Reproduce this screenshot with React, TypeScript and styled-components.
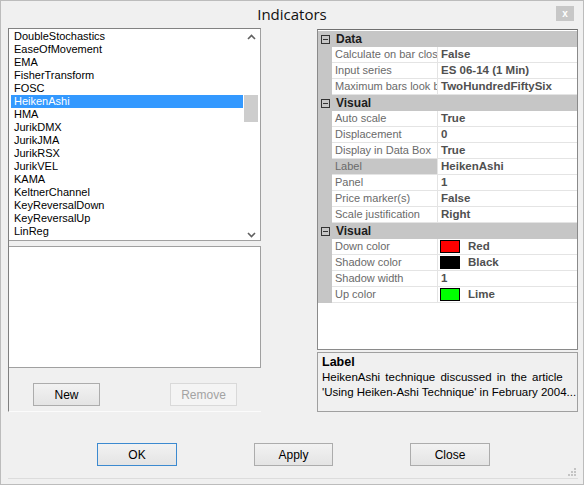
import React from "react"
import styled, { createGlobalStyle } from "styled-components"

const GlobalStyle = createGlobalStyle`
  * { box-sizing: border-box; }
  body {
    margin: 0;
    background: #f0f0f0;
    font-family: "Liberation Sans", Arial, sans-serif;
  }
`

const Window = styled.div`
  width: 584px;
  height: 485px;
  border: 1px solid #bcbcbc;
  background: #f0f0f0;
  display: flex;
  flex-direction: column;
  position: relative;
`

const TitleBar = styled.div`
  height: 25px;
  display: flex;
  align-items: center;
  justify-content: center;
  font-family: "Open Sans", "Noto Sans", sans-serif;
  font-size: 15px;
  color: #111;
  position: relative;
`

const CloseBox = styled.div`
  position: absolute;
  right: 9px;
  top: 5px;
  width: 18px;
  height: 15px;
  background: #c7c7c7;
  color: #fff;
  font-size: 10px;
  font-weight: bold;
  display: flex;
  align-items: center;
  justify-content: center;
  font-family: "Liberation Sans", sans-serif;
`

const Client = styled.div`
  flex: 1;
  margin: 0 5px 5px 7px;
  display: flex;
  flex-direction: column;
  border-bottom: 1px solid #dcdcdc;
  position: relative;
`

const Split = styled.div`
  display: flex;
  padding-top: 2px;
  gap: 56px;
`

const LeftPanel = styled.div`
  width: 253px;
  height: 384px;
  border-left: 1px solid #7f7f7f;
  border-bottom: 1px solid #fbfbfb;
  display: flex;
  flex-direction: column;
`

const ListBox = styled.div`
  width: 252px;
  height: 213px;
  border: 1px solid #a0a0a0;
  border-top-color: #828282;
  border-left: none;
  background: #fff;
  display: flex;
  padding-top: 1px;
`

const Items = styled.div`
  flex: 1;
  padding-left: 2px;
`

const Item = styled.div<{ $selected?: boolean }>`
  height: 13px;
  line-height: 13px;
  font-size: 11px;
  padding-left: 3px;
  color: ${(p) => (p.$selected ? "#fff" : "#000")};
  background: ${(p) => (p.$selected ? "#3399ff" : "transparent")};
  white-space: nowrap;
`

const ScrollBar = styled.div`
  width: 17px;
  position: relative;
  display: flex;
  flex-direction: column;
  justify-content: space-between;
  align-items: center;
  padding: 4px 0 2px;
`

const Thumb = styled.div`
  position: absolute;
  left: 1px;
  top: 65px;
  width: 14px;
  height: 27px;
  background: #cdcdcd;
`

const DetailBox = styled.div`
  margin-top: 5px;
  width: 252px;
  height: 122px;
  border: 1px solid #a0a0a0;
  border-left: none;
  background: #fff;
`

const PanelButtons = styled.div`
  display: flex;
  gap: 70px;
  padding: 15px 0 0 24px;
`

const Button = styled.button<{ $width?: number; $default?: boolean }>`
  width: ${(p) => p.$width ?? 67}px;
  height: 23px;
  padding: 0;
  font-family: "Liberation Sans", Arial, sans-serif;
  font-size: 12px;
  color: #000;
  border: 1px solid ${(p) => (p.$default ? "#3c8ad0" : "#acacac")};
  background: linear-gradient(#f2f2f2, #e4e4e4);
  &:disabled {
    color: #a3a3a3;
    border-color: #d9d9d9;
    background: #f4f4f4;
  }
`

const RightPanel = styled.div`
  width: 261px;
  display: flex;
  flex-direction: column;
`

const Grid = styled.div`
  margin-top: 1px;
  height: 321px;
  border: 1px solid #8a8a8a;
  border-top-color: #6f6f6f;
  padding-top: 1px;
  background: #fff;
`

const Row = styled.div`
  display: grid;
  grid-template-columns: 14px 106px 1fr;
  height: 16px;
`

const Margin = styled.div`
  background: #c6c6c6;
`

const Name = styled.div<{ $selected?: boolean }>`
  font-size: 11px;
  line-height: 15px;
  padding-left: 3px;
  color: #6a6a6a;
  background: ${(p) => (p.$selected ? "#c6c6c6" : "#fff")};
  border-bottom: 1px solid #e4e4e4;
  border-right: 1px solid #e4e4e4;
  white-space: nowrap;
  overflow: hidden;
`

const Value = styled.div`
  font-size: 11.5px;
  font-weight: bold;
  line-height: 15px;
  padding-left: 3px;
  color: #505050;
  border-bottom: 1px solid #e4e4e4;
  display: flex;
  align-items: center;
  white-space: nowrap;
  overflow: hidden;
`

const Swatch = styled.span<{ $color: string }>`
  width: 20px;
  height: 13px;
  border: 1px solid #000;
  background: ${(p) => p.$color};
  margin: 0 8px 0 -1px;
`

const Category = styled.div`
  display: flex;
  align-items: center;
  height: 16px;
  background: #c6c6c6;
  font-size: 12px;
  font-weight: bold;
  color: #1c1c1c;
`

const Toggle = styled.span`
  width: 9px;
  height: 9px;
  margin: 0 6px 0 3px;
  border: 1px solid #333;
  position: relative;
  &::after {
    content: "";
    position: absolute;
    left: 1px;
    top: 3px;
    width: 5px;
    height: 1px;
    background: #333;
  }
`

const Description = styled.div`
  margin-top: 2px;
  height: 60px;
  border: 1px solid #a0a0a0;
  padding: 2px 4px;
  font-size: 11.5px;
  color: #000;
`

const DescTitle = styled.div`
  font-weight: bold;
  font-size: 12.5px;
  line-height: 15px;
`

const DescLine = styled.div<{ $spacing?: number }>`
  line-height: 15px;
  white-space: nowrap;
  word-spacing: ${(p) => p.$spacing ?? 0}px;
`

const Footer = styled.div`
  display: flex;
  gap: 77px;
  padding: 31px 0 0 89px;
`

const Grip = styled.svg`
  position: absolute;
  right: 2px;
  bottom: 2px;
`

const indicators = [
  "DoubleStochastics",
  "EaseOfMovement",
  "EMA",
  "FisherTransform",
  "FOSC",
  "HeikenAshi",
  "HMA",
  "JurikDMX",
  "JurikJMA",
  "JurikRSX",
  "JurikVEL",
  "KAMA",
  "KeltnerChannel",
  "KeyReversalDown",
  "KeyReversalUp",
  "LinReg",
]

type Prop = { name: string; value: string; color?: string; selected?: boolean }

const sections: { title: string; props: Prop[] }[] = [
  {
    title: "Data",
    props: [
      { name: "Calculate on bar close", value: "False" },
      { name: "Input series", value: "ES 06-14 (1 Min)" },
      { name: "Maximum bars look back", value: "TwoHundredFiftySix" },
    ],
  },
  {
    title: "Visual",
    props: [
      { name: "Auto scale", value: "True" },
      { name: "Displacement", value: "0" },
      { name: "Display in Data Box", value: "True" },
      { name: "Label", value: "HeikenAshi", selected: true },
      { name: "Panel", value: "1" },
      { name: "Price marker(s)", value: "False" },
      { name: "Scale justification", value: "Right" },
    ],
  },
  {
    title: "Visual",
    props: [
      { name: "Down color", value: "Red", color: "#ff0000" },
      { name: "Shadow color", value: "Black", color: "#000000" },
      { name: "Shadow width", value: "1" },
      { name: "Up color", value: "Lime", color: "#00ff00" },
    ],
  },
]

const Chevron = ({ up }: { up?: boolean }) => (
  <svg width="9" height="6" viewBox="0 0 9 6">
    <path
      d={up ? "M1 5 L4.5 1.5 L8 5" : "M1 1 L4.5 4.5 L8 1"}
      fill="none"
      stroke="#606060"
      strokeWidth="1.6"
    />
  </svg>
)

const App = function () {
  return (
    <>
      <GlobalStyle />
      <Window>
        <TitleBar>
          Indicators
          <CloseBox>x</CloseBox>
        </TitleBar>
        <Client>
          <Split>
            <LeftPanel>
              <ListBox>
                <Items>
                  {indicators.map((name) => (
                    <Item key={name} $selected={name === "HeikenAshi"}>
                      {name}
                    </Item>
                  ))}
                </Items>
                <ScrollBar>
                  <Chevron up />
                  <Thumb />
                  <Chevron />
                </ScrollBar>
              </ListBox>
              <DetailBox />
              <PanelButtons>
                <Button>New</Button>
                <Button disabled>Remove</Button>
              </PanelButtons>
            </LeftPanel>
            <RightPanel>
              <Grid>
                {sections.map((section, i) => (
                  <React.Fragment key={i}>
                    <Category>
                      <Toggle />
                      {section.title}
                    </Category>
                    {section.props.map((prop) => (
                      <Row key={prop.name}>
                        <Margin />
                        <Name $selected={prop.selected}>{prop.name}</Name>
                        <Value>
                          {prop.color && <Swatch $color={prop.color} />}
                          {prop.value}
                        </Value>
                      </Row>
                    ))}
                  </React.Fragment>
                ))}
              </Grid>
              <Description>
                <DescTitle>Label</DescTitle>
                <DescLine $spacing={2}>
                  HeikenAshi technique discussed in the article
                </DescLine>
                <DescLine>'Using Heiken-Ashi Technique' in February 2004...</DescLine>
              </Description>
            </RightPanel>
          </Split>
          <Footer>
            <Button $width={80} $default>
              OK
            </Button>
            <Button $width={79}>Apply</Button>
            <Button $width={80}>Close</Button>
          </Footer>
          <Grip width="8" height="8" viewBox="0 0 8 8">
            <rect x="6" y="0" width="2" height="2" fill="#c4c4c4" />
            <rect x="3" y="3" width="2" height="2" fill="#c4c4c4" />
            <rect x="6" y="3" width="2" height="2" fill="#c4c4c4" />
            <rect x="0" y="6" width="2" height="2" fill="#c4c4c4" />
            <rect x="3" y="6" width="2" height="2" fill="#c4c4c4" />
            <rect x="6" y="6" width="2" height="2" fill="#c4c4c4" />
          </Grip>
        </Client>
      </Window>
    </>
  )
}

export default App
